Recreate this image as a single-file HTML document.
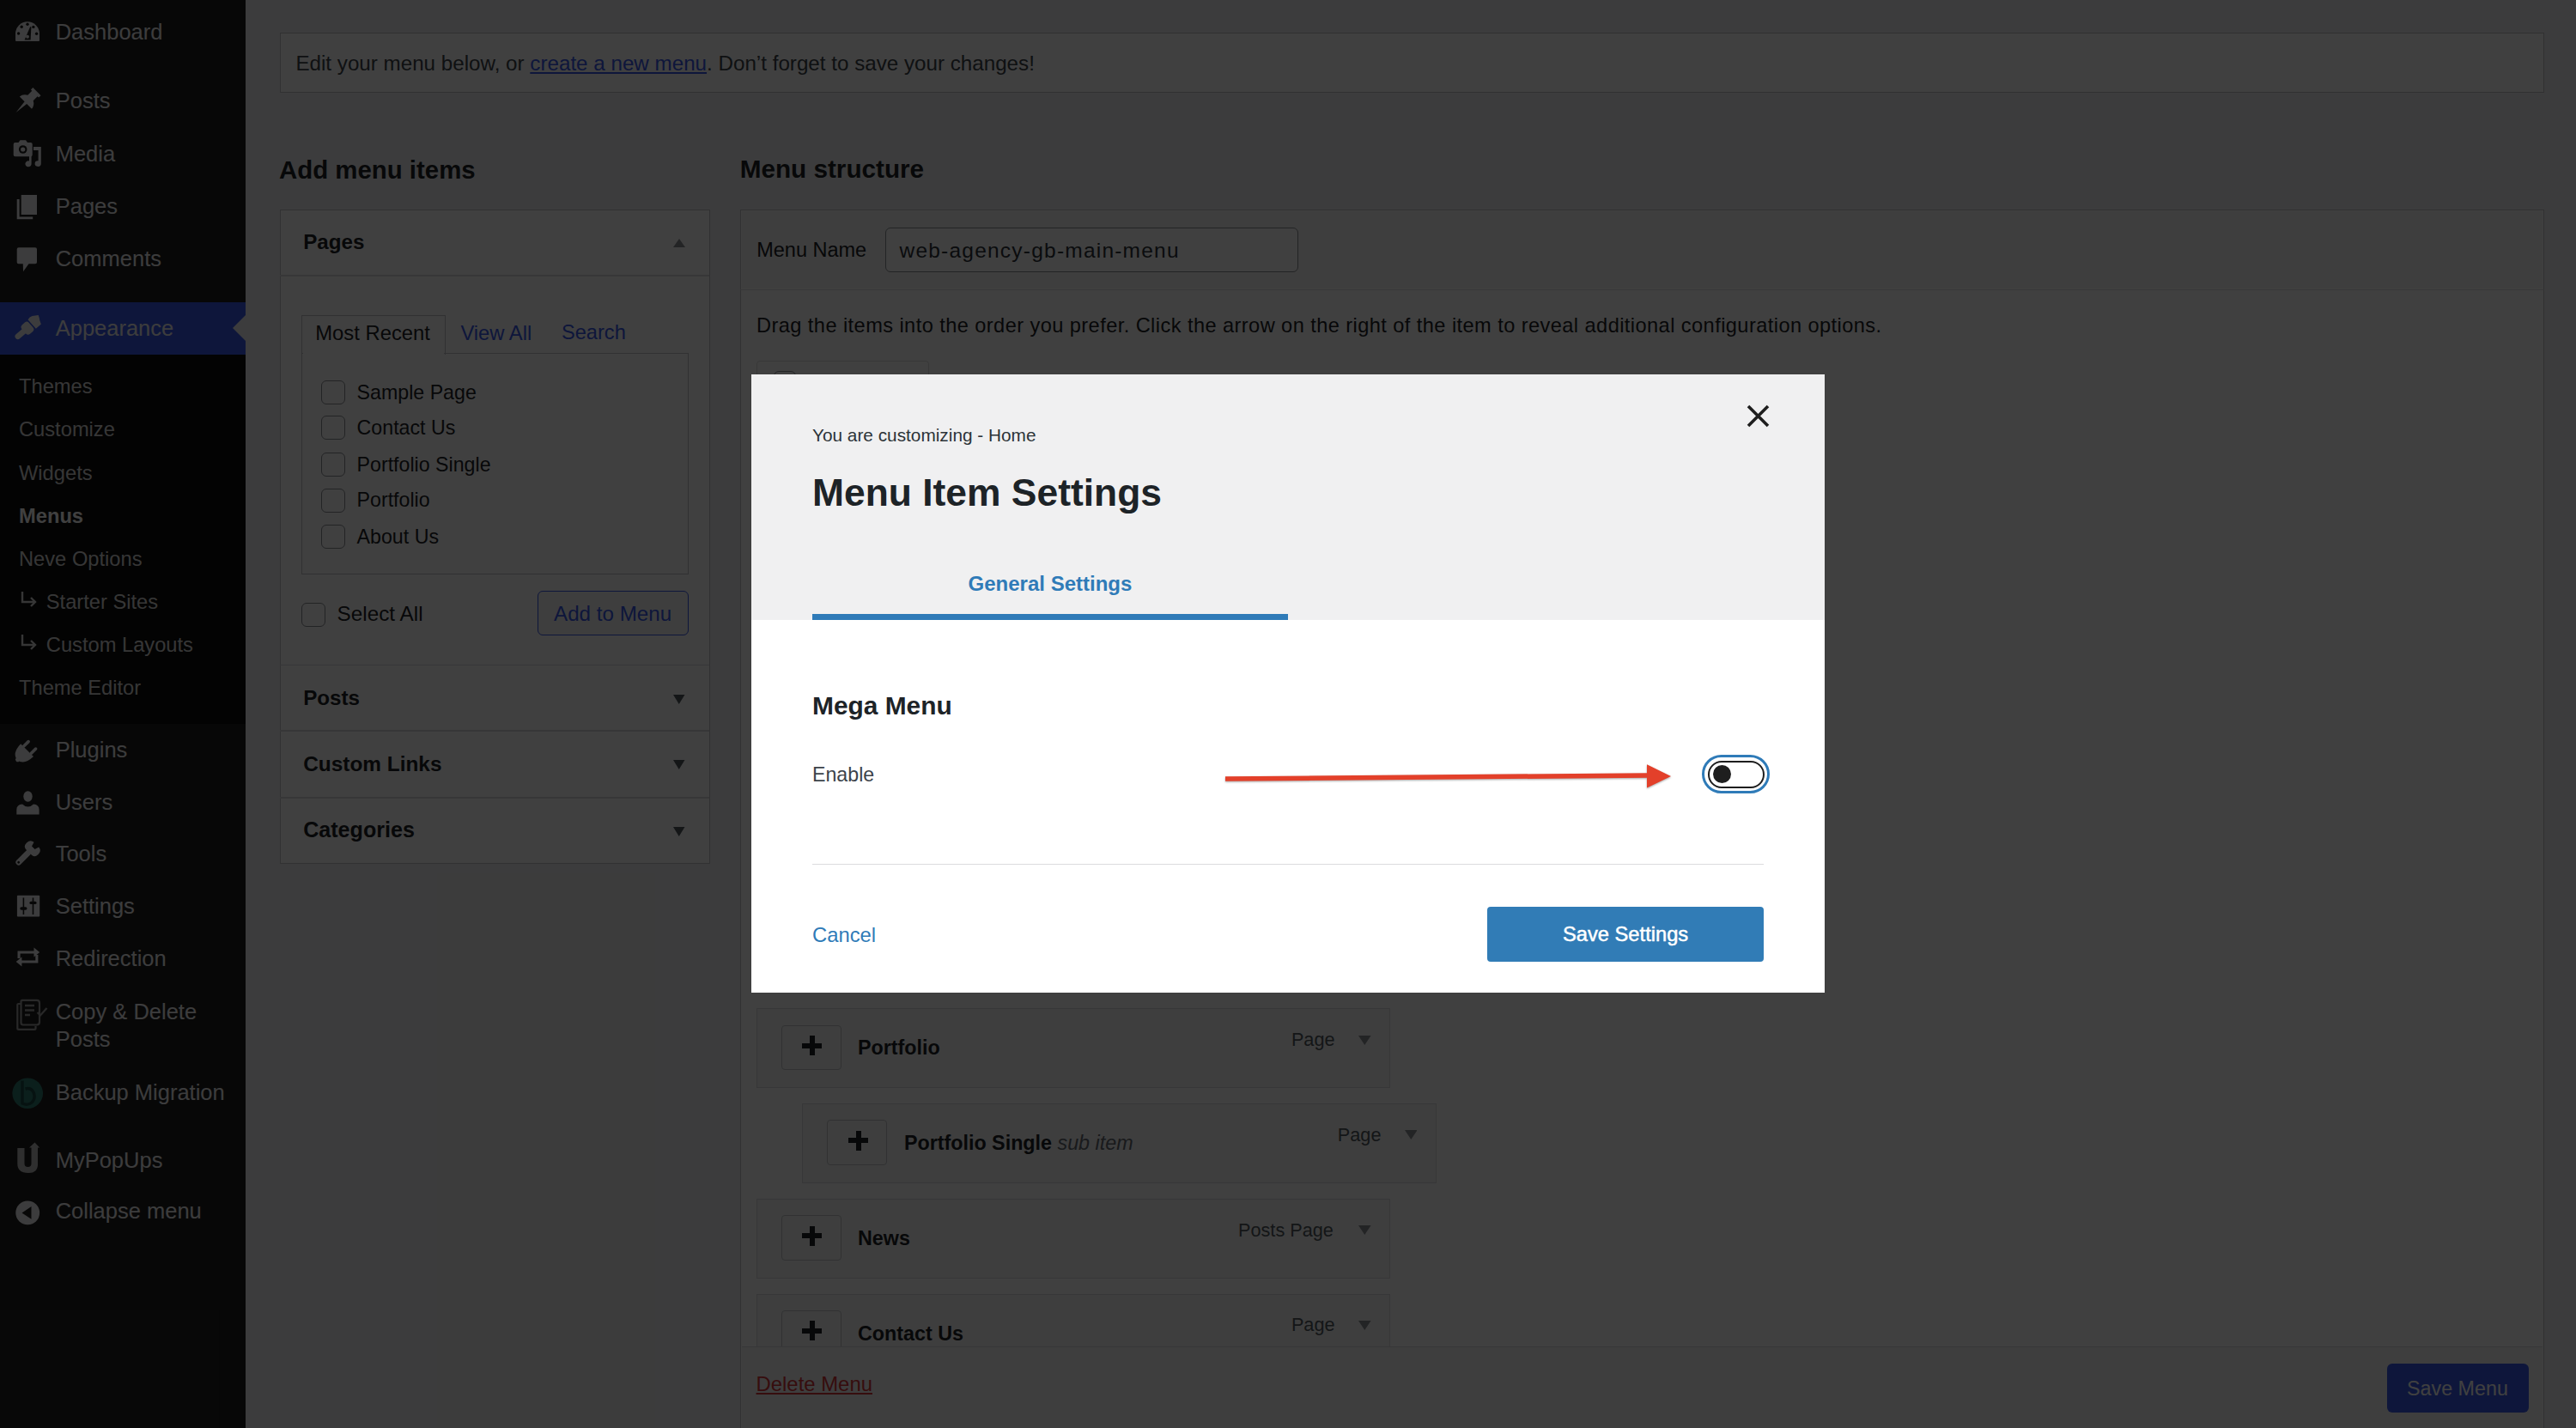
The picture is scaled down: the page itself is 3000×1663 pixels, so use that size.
<!DOCTYPE html>
<html><head><meta charset="utf-8"><title>Menu Item Settings</title>
<style>
html,body{margin:0;padding:0;}
body{width:3000px;height:1663px;position:relative;overflow:hidden;background:#f0f0f1;font-family:"Liberation Sans", sans-serif;}
.t{position:absolute;white-space:nowrap;}
.r{position:absolute;}
</style></head><body>
<div class="r" style="left:0px;top:0px;width:286px;height:1663px;background:#1e1e1e"></div>
<div class="r" style="left:0px;top:352px;width:286px;height:60.6px;background:#3858e9"></div>
<svg class="r" style="left:271px;top:367px" width="15" height="30"><polygon points="15,0 0,15 15,30" fill="#f0f0f1"/></svg>
<div class="r" style="left:0px;top:412.6px;width:286px;height:430px;background:#0c0c0c"></div>
<div class="t " style="left:64.7px;top:24.5px;font-size:25.5px;line-height:25.5px;font-weight:400;color:#f0f0f1;">Dashboard</div>
<div class="t " style="left:64.7px;top:105.3px;font-size:25.5px;line-height:25.5px;font-weight:400;color:#f0f0f1;">Posts</div>
<div class="t " style="left:64.7px;top:166.5px;font-size:25.5px;line-height:25.5px;font-weight:400;color:#f0f0f1;">Media</div>
<div class="t " style="left:64.7px;top:228.3px;font-size:25.5px;line-height:25.5px;font-weight:400;color:#f0f0f1;">Pages</div>
<div class="t " style="left:64.7px;top:289.2px;font-size:25.5px;line-height:25.5px;font-weight:400;color:#f0f0f1;">Comments</div>
<div class="t " style="left:64.7px;top:369.5px;font-size:25.5px;line-height:25.5px;font-weight:400;color:#f0f0f1;">Appearance</div>
<div class="t " style="left:64.7px;top:860.7px;font-size:25.5px;line-height:25.5px;font-weight:400;color:#f0f0f1;">Plugins</div>
<div class="t " style="left:64.7px;top:921.8px;font-size:25.5px;line-height:25.5px;font-weight:400;color:#f0f0f1;">Users</div>
<div class="t " style="left:64.7px;top:982.1px;font-size:25.5px;line-height:25.5px;font-weight:400;color:#f0f0f1;">Tools</div>
<div class="t " style="left:64.7px;top:1043.0px;font-size:25.5px;line-height:25.5px;font-weight:400;color:#f0f0f1;">Settings</div>
<div class="t " style="left:64.7px;top:1104.2px;font-size:25.5px;line-height:25.5px;font-weight:400;color:#f0f0f1;">Redirection</div>
<div class="t " style="left:64.7px;top:1165.9px;font-size:25.5px;line-height:25.5px;font-weight:400;color:#f0f0f1;">Copy &amp; Delete</div>
<div class="t " style="left:64.7px;top:1198.3px;font-size:25.5px;line-height:25.5px;font-weight:400;color:#f0f0f1;">Posts</div>
<div class="t " style="left:64.7px;top:1259.8px;font-size:25.5px;line-height:25.5px;font-weight:400;color:#f0f0f1;">Backup Migration</div>
<div class="t " style="left:64.7px;top:1339.2px;font-size:25.5px;line-height:25.5px;font-weight:400;color:#f0f0f1;">MyPopUps</div>
<div class="t " style="left:64.7px;top:1398.3px;font-size:25.5px;line-height:25.5px;font-weight:400;color:#f0f0f1;">Collapse menu</div>
<div class="t " style="left:22px;top:438.7px;font-size:23.7px;line-height:23.7px;font-weight:400;color:#d8d8d8;">Themes</div>
<div class="t " style="left:22px;top:488.7px;font-size:23.7px;line-height:23.7px;font-weight:400;color:#d8d8d8;">Customize</div>
<div class="t " style="left:22px;top:540.2px;font-size:23.7px;line-height:23.7px;font-weight:400;color:#d8d8d8;">Widgets</div>
<div class="t " style="left:22px;top:640.2px;font-size:23.7px;line-height:23.7px;font-weight:400;color:#d8d8d8;">Neve Options</div>
<div class="t " style="left:22px;top:790.2px;font-size:23.7px;line-height:23.7px;font-weight:400;color:#d8d8d8;">Theme Editor</div>
<div class="t " style="left:22px;top:590.2px;font-size:23.7px;line-height:23.7px;font-weight:700;color:#ffffff;">Menus</div>
<div class="t " style="left:53.8px;top:690.2px;font-size:23.7px;line-height:23.7px;font-weight:400;color:#d8d8d8;">Starter Sites</div>
<div class="t " style="left:53.8px;top:740.2px;font-size:23.7px;line-height:23.7px;font-weight:400;color:#d8d8d8;">Custom Layouts</div>
<svg class="r" style="left:23px;top:688.3px" width="22" height="20"><path d="M3 1 V13 H17" stroke="#d8d8d8" stroke-width="2.4" fill="none"/><path d="M13 8 L18 13 L13 18" stroke="#d8d8d8" stroke-width="2.4" fill="none"/></svg>
<svg class="r" style="left:23px;top:738.3px" width="22" height="20"><path d="M3 1 V13 H17" stroke="#d8d8d8" stroke-width="2.4" fill="none"/><path d="M13 8 L18 13 L13 18" stroke="#d8d8d8" stroke-width="2.4" fill="none"/></svg>
<div class="r" style="left:286px;top:0px;width:2714px;height:1663px;background:#f0f0f1"></div>
<div class="r" style="left:325.5px;top:38px;width:2637.5px;height:70px;background:#fff;border:1.8px solid #c3c4c7;box-sizing:border-box"></div>
<div class="t " style="left:344.4px;top:62.3px;font-size:24.2px;line-height:24.2px;font-weight:400;color:#3c434a;">Edit your menu below, or <span style="color:#3858e9;text-decoration:underline">create a new menu</span>. Don’t forget to save your changes!</div>
<div class="t " style="left:325px;top:182.5px;font-size:29.4px;line-height:29.4px;font-weight:700;color:#1d2327;">Add menu items</div>
<div class="t " style="left:861.7px;top:182.3px;font-size:29.7px;line-height:29.7px;font-weight:700;color:#1d2327;">Menu structure</div>
<div class="r" style="left:325.5px;top:244px;width:501px;height:762px;background:#fff;border:1.8px solid #c3c4c7;box-sizing:border-box"></div>
<div class="r" style="left:326px;top:320px;width:500px;height:1.8px;background:#dcdcde"></div>
<div class="t " style="left:353.2px;top:269.8px;font-size:24.2px;line-height:24.2px;font-weight:700;color:#1d2327;">Pages</div>
<svg class="r" style="left:784px;top:278px" width="14" height="10"><polygon points="7,0 14,10 0,10" fill="#8c8f94"/></svg>
<div class="r" style="left:350.6px;top:366.9px;width:168.6px;height:46px;background:#fff;border:1.8px solid #c3c4c7;border-bottom:none;box-sizing:border-box"></div>
<div class="t " style="left:367.3px;top:376.3px;font-size:23.8px;line-height:23.8px;font-weight:400;color:#1d2327;">Most Recent</div>
<div class="t " style="left:536.4px;top:376.3px;font-size:23.8px;line-height:23.8px;font-weight:400;color:#3858e9;">View All</div>
<div class="t " style="left:654px;top:376.4px;font-size:23.6px;line-height:23.6px;font-weight:400;color:#3858e9;">Search</div>
<div class="r" style="left:350.6px;top:410.6px;width:451px;height:258px;border:1.8px solid #c3c4c7;box-sizing:border-box"></div>
<div class="r" style="left:352.8px;top:409px;width:164.4px;height:4px;background:#fff"></div>
<div class="r" style="left:373.6px;top:443.2px;width:28px;height:28px;border:1.8px solid #8c8f94;border-radius:6px;box-sizing:border-box;background:#fff"></div>
<div class="t " style="left:415.6px;top:446.1px;font-size:23.2px;line-height:23.2px;font-weight:400;color:#1d2327;">Sample Page</div>
<div class="r" style="left:373.6px;top:484.4px;width:28px;height:28px;border:1.8px solid #8c8f94;border-radius:6px;box-sizing:border-box;background:#fff"></div>
<div class="t " style="left:415.6px;top:487.3px;font-size:23.2px;line-height:23.2px;font-weight:400;color:#1d2327;">Contact Us</div>
<div class="r" style="left:373.6px;top:527.4px;width:28px;height:28px;border:1.8px solid #8c8f94;border-radius:6px;box-sizing:border-box;background:#fff"></div>
<div class="t " style="left:415.6px;top:530.3px;font-size:23.2px;line-height:23.2px;font-weight:400;color:#1d2327;">Portfolio Single</div>
<div class="r" style="left:373.6px;top:568.5px;width:28px;height:28px;border:1.8px solid #8c8f94;border-radius:6px;box-sizing:border-box;background:#fff"></div>
<div class="t " style="left:415.6px;top:571.4px;font-size:23.2px;line-height:23.2px;font-weight:400;color:#1d2327;">Portfolio</div>
<div class="r" style="left:373.6px;top:611.2px;width:28px;height:28px;border:1.8px solid #8c8f94;border-radius:6px;box-sizing:border-box;background:#fff"></div>
<div class="t " style="left:415.6px;top:614.1px;font-size:23.2px;line-height:23.2px;font-weight:400;color:#1d2327;">About Us</div>
<div class="r" style="left:350.6px;top:702px;width:28px;height:28px;border:1.8px solid #8c8f94;border-radius:6px;box-sizing:border-box;background:#fff"></div>
<div class="t " style="left:392.6px;top:702.8px;font-size:24.3px;line-height:24.3px;font-weight:400;color:#1d2327;">Select All</div>
<div class="r" style="left:625.5px;top:688.2px;width:176px;height:52.2px;border:1.8px solid #3858e9;border-radius:6px;box-sizing:border-box;background:#f6f7f7"></div>
<div class="t " style="left:645px;top:702.7px;font-size:24.2px;line-height:24.2px;font-weight:400;color:#3858e9;">Add to Menu</div>
<div class="r" style="left:326px;top:773.5px;width:500px;height:1.8px;background:#dcdcde"></div>
<div class="t " style="left:353.2px;top:801.4px;font-size:24.2px;line-height:24.2px;font-weight:700;color:#1d2327;">Posts</div>
<svg class="r" style="left:784.3px;top:808.5px" width="13.5" height="11"><polygon points="0,0 13.5,0 6.75,11" fill="#50575e"/></svg>
<div class="r" style="left:326px;top:850.3px;width:500px;height:1.8px;background:#dcdcde"></div>
<div class="t " style="left:353.2px;top:878.1px;font-size:24.4px;line-height:24.4px;font-weight:700;color:#1d2327;">Custom Links</div>
<svg class="r" style="left:784.3px;top:885.3px" width="13.5" height="11"><polygon points="0,0 13.5,0 6.75,11" fill="#50575e"/></svg>
<div class="r" style="left:326px;top:928px;width:500px;height:1.8px;background:#dcdcde"></div>
<div class="t " style="left:353.2px;top:954.0px;font-size:25.1px;line-height:25.1px;font-weight:700;color:#1d2327;">Categories</div>
<svg class="r" style="left:784.3px;top:963px" width="13.5" height="11"><polygon points="0,0 13.5,0 6.75,11" fill="#50575e"/></svg>
<div class="r" style="left:862px;top:244px;width:2101.3px;height:1500px;background:#fff;border:1.8px solid #c3c4c7;box-sizing:border-box"></div>
<div class="r" style="left:863.8px;top:245.8px;width:2097.4px;height:90.7px;background:#f6f7f7"></div>
<div class="r" style="left:862px;top:336.5px;width:2101px;height:1.8px;background:#dcdcde"></div>
<div class="t " style="left:881.2px;top:280.3px;font-size:23.5px;line-height:23.5px;font-weight:400;color:#1d2327;">Menu Name</div>
<div class="r" style="left:1030.7px;top:265px;width:481.5px;height:52.2px;border:1.8px solid #8c8f94;border-radius:6px;box-sizing:border-box;background:#fff"></div>
<div class="t " style="left:1047.5px;top:279.5px;font-size:24.5px;line-height:24.5px;font-weight:400;color:#2c3338;letter-spacing:1.22px">web-agency-gb-main-menu</div>
<div class="t " style="left:881px;top:368.0px;font-size:23.6px;line-height:23.6px;font-weight:400;color:#1d2327;letter-spacing:0.43px">Drag the items into the order you prefer. Click the arrow on the right of the item to reveal additional configuration options.</div>
<div class="r" style="left:881px;top:420px;width:200.5px;height:100px;border:1.8px solid #dcdcde;border-radius:4px;box-sizing:border-box;background:#fff"></div>
<div class="r" style="left:900.8px;top:432px;width:26.6px;height:26px;border:1.8px solid #8c8f94;border-radius:6px;box-sizing:border-box"></div>
<div class="r" style="left:880.5px;top:1174.4px;width:738.5px;height:93px;background:#f6f7f7;border:1.8px solid #dcdcde;box-sizing:border-box"></div>
<div class="r" style="left:909.5px;top:1193.8000000000002px;width:70px;height:52.5px;background:#f6f7f7;border:1.8px solid #c3c4c7;border-radius:4px;box-sizing:border-box"></div>
<div class="r" style="left:934.1999999999999px;top:1214.5px;width:23.2px;height:6px;background:#1d2327"></div>
<div class="r" style="left:942.8px;top:1205.9px;width:6px;height:23.2px;background:#1d2327"></div>
<div class="t " style="left:999.0px;top:1209.2px;font-size:23.3px;line-height:23.3px;font-weight:700;color:#1d2327;">Portfolio</div>
<div class="t " style="left:1503.9px;top:1200.0px;font-size:21.7px;line-height:21.7px;font-weight:400;color:#50575e;">Page</div>
<svg class="r" style="left:1582.0px;top:1205.7px" width="14.6" height="11"><polygon points="0,0 14.6,0 7.3,11" fill="#8c8f94"/></svg>
<div class="r" style="left:934.4px;top:1285px;width:738.5px;height:93px;background:#f6f7f7;border:1.8px solid #dcdcde;box-sizing:border-box"></div>
<div class="r" style="left:963.4px;top:1304.4px;width:70px;height:52.5px;background:#f6f7f7;border:1.8px solid #c3c4c7;border-radius:4px;box-sizing:border-box"></div>
<div class="r" style="left:988.0999999999999px;top:1325.1px;width:23.2px;height:6px;background:#1d2327"></div>
<div class="r" style="left:996.6999999999999px;top:1316.5px;width:6px;height:23.2px;background:#1d2327"></div>
<div class="t " style="left:1052.9px;top:1319.8px;font-size:23.3px;line-height:23.3px;font-weight:700;color:#1d2327;">Portfolio Single <i style='font-weight:400;color:#646970'>sub item</i></div>
<div class="t " style="left:1557.8000000000002px;top:1310.6px;font-size:21.7px;line-height:21.7px;font-weight:400;color:#50575e;">Page</div>
<svg class="r" style="left:1635.9px;top:1316.3px" width="14.6" height="11"><polygon points="0,0 14.6,0 7.3,11" fill="#8c8f94"/></svg>
<div class="r" style="left:880.5px;top:1396px;width:738.5px;height:93px;background:#f6f7f7;border:1.8px solid #dcdcde;box-sizing:border-box"></div>
<div class="r" style="left:909.5px;top:1415.4px;width:70px;height:52.5px;background:#f6f7f7;border:1.8px solid #c3c4c7;border-radius:4px;box-sizing:border-box"></div>
<div class="r" style="left:934.1999999999999px;top:1436.1px;width:23.2px;height:6px;background:#1d2327"></div>
<div class="r" style="left:942.8px;top:1427.5px;width:6px;height:23.2px;background:#1d2327"></div>
<div class="t " style="left:999.0px;top:1430.8px;font-size:23.3px;line-height:23.3px;font-weight:700;color:#1d2327;">News</div>
<div class="t " style="left:1442.0px;top:1421.6px;font-size:21.7px;line-height:21.7px;font-weight:400;color:#50575e;">Posts Page</div>
<svg class="r" style="left:1582.0px;top:1427.3px" width="14.6" height="11"><polygon points="0,0 14.6,0 7.3,11" fill="#8c8f94"/></svg>
<div class="r" style="left:880.5px;top:1506.8px;width:738.5px;height:93px;background:#f6f7f7;border:1.8px solid #dcdcde;box-sizing:border-box"></div>
<div class="r" style="left:909.5px;top:1526.2px;width:70px;height:52.5px;background:#f6f7f7;border:1.8px solid #c3c4c7;border-radius:4px;box-sizing:border-box"></div>
<div class="r" style="left:934.1999999999999px;top:1546.8999999999999px;width:23.2px;height:6px;background:#1d2327"></div>
<div class="r" style="left:942.8px;top:1538.3px;width:6px;height:23.2px;background:#1d2327"></div>
<div class="t " style="left:999.0px;top:1541.6px;font-size:23.3px;line-height:23.3px;font-weight:700;color:#1d2327;">Contact Us</div>
<div class="t " style="left:1503.9px;top:1532.4px;font-size:21.7px;line-height:21.7px;font-weight:400;color:#50575e;">Page</div>
<svg class="r" style="left:1582.0px;top:1538.1px" width="14.6" height="11"><polygon points="0,0 14.6,0 7.3,11" fill="#8c8f94"/></svg>
<div class="r" style="left:863.8px;top:1568.4px;width:2097.4px;height:100px;background:#f6f7f7;border-top:1.8px solid #dcdcde;box-sizing:border-box"></div>
<div class="t " style="left:880.5px;top:1599.7px;font-size:23.9px;line-height:23.9px;font-weight:400;color:#d63638;text-decoration:underline">Delete Menu</div>
<div class="r" style="left:2780px;top:1588px;width:165px;height:56.5px;background:#3858e9;border-radius:6px"></div>
<div class="t " style="left:2803px;top:1605.5px;font-size:23.3px;line-height:23.3px;font-weight:400;color:#ffffff;">Save Menu</div>
<svg class="r" style="left:0;top:0" width="286" height="1663"><path d="M18 47 V39.3 A14 14 0 0 1 46 39.3 V47 Q46 48 45 48 H19 Q18 48 18 47 Z" fill="#f0f0f1"/><circle cx="21.6" cy="39" r="1.7" fill="#1e1e1e"/><circle cx="25.2" cy="31.2" r="1.7" fill="#1e1e1e"/><circle cx="32" cy="28.3" r="1.7" fill="#1e1e1e"/><circle cx="38.9" cy="31.4" r="1.7" fill="#1e1e1e"/><circle cx="42.6" cy="39.2" r="1.7" fill="#1e1e1e"/><path d="M28.6 46.5 L35.2 31 L36.4 31.4 L35.6 46.5 Z" fill="#1e1e1e"/><circle cx="32" cy="42.8" r="2" fill="#f0f0f1"/><g transform="translate(32,117.5) rotate(45)"><path d="M-6.5 -15.5 H6.5 V-12 H4.5 V-5 Q9.5 -2.5 10 3 H1.8 L0 19 L-1.8 3 H-10 Q-9.5 -2.5 -4.5 -5 V-12 H-6.5 Z" fill="#f0f0f1"/></g><path d="M15.7 168 Q15.7 166 17.7 166 H21.5 L23.5 163.2 H30 L32 166 H35.7 Q37.7 166 37.7 168 V180.3 Q37.7 182.3 35.7 182.3 H17.7 Q15.7 182.3 15.7 180.3 Z" fill="#f0f0f1"/><circle cx="26.7" cy="174" r="4.8" fill="#1e1e1e"/><circle cx="26.7" cy="174" r="2.6" fill="#f0f0f1"/><path d="M39 171 H47.8 V190.5 A3.6 3.4 0 1 1 44.6 187.2 V175 H39 Z" fill="#f0f0f1"/><path d="M34 181.5 H36.6 V190.5 A3.6 3.4 0 1 1 34 187.5 Z" fill="#f0f0f1"/><path d="M24.7 227 H43 V250 H24.7 Z" fill="#f0f0f1"/><path d="M19.7 232 H22.6 V252.4 H38.2 V255.2 H19.7 Z" fill="#f0f0f1"/><path d="M21.7 288.2 H41 Q43 288.2 43 290.2 V305.3 Q43 307.3 41 307.3 H33.5 L27 316.3 L26.8 307.3 H21.7 Q19.7 307.3 19.7 305.3 V290.2 Q19.7 288.2 21.7 288.2 Z" fill="#f0f0f1"/><g transform="translate(19.5,393) rotate(-41)"><rect x="-1.5" y="-3.3" width="17" height="6.6" rx="3.3" fill="#f0f0f1"/><rect x="11" y="-7" width="11" height="14" rx="3.5" fill="#f0f0f1"/><path d="M23.5 -7.2 Q27 -8.5 30 -7 L36 -3 Q35 0 33 3 L31.5 7 H23.5 Z" fill="#f0f0f1"/></g><g transform="translate(31.2,874) rotate(-45)"><path d="M0.5 -10.5 Q-15 -10 -15.5 0 Q-15 10 0.5 10.5 Z" fill="#f0f0f1"/><rect x="-0.5" y="-7.8" width="11" height="3.6" rx="1.8" fill="#f0f0f1"/><rect x="-0.5" y="4.2" width="11" height="3.6" rx="1.8" fill="#f0f0f1"/><circle cx="-15" cy="0" r="2.6" fill="#f0f0f1"/></g><ellipse cx="32.5" cy="927.5" rx="5.2" ry="6.2" fill="#f0f0f1"/><path d="M19.3 948.4 V943 Q19.3 937 26 936.5 Q29 939.5 32.5 939.5 Q36 939.5 39 936.5 Q45.6 937 45.6 943 V948.4 Z" fill="#f0f0f1"/><g transform="translate(21.5,1004.5) rotate(-45)"><rect x="-3" y="-3.4" width="22" height="6.8" rx="3.4" fill="#f0f0f1"/><circle cx="0.2" cy="0" r="1.4" fill="#1e1e1e"/><path d="M17 -4 Q17 -9.5 23 -9.5 Q29 -9.5 29.5 -4 L24.5 -2.5 V2.5 L29.5 4 Q29 9.5 23 9.5 Q17 9.5 17 4 Z" fill="#f0f0f1"/></g><rect x="19.9" y="1042.7" width="26.3" height="24.9" rx="1" fill="#f0f0f1"/><path d="M27.4 1045.5 V1065 M38.5 1045.5 V1065" stroke="#1e1e1e" stroke-width="1.6"/><rect x="23.3" y="1056.3" width="8.2" height="3.4" rx="1.7" fill="#1e1e1e"/><rect x="34.4" y="1049.7" width="8.2" height="3.4" rx="1.7" fill="#1e1e1e"/><path d="M20.5 1116 V1107.5 H39.5 V1103.5 L46.2 1109 L39.5 1114.5 V1110.6 H23.6 V1116 Z" fill="#f0f0f1"/><path d="M44.4 1112 V1121.5 H25.4 V1125.5 L18.7 1120 L25.4 1114.5 V1118.4 H41.3 V1112 Z" fill="#f0f0f1"/><path d="M24 1169 H21.5 Q20.3 1169 20.3 1170.5 V1197.5 Q20.3 1198.9 21.8 1198.9 H40 Q41.5 1198.9 41.5 1197.5 V1195" fill="none" stroke="#a0a0a0" stroke-width="2.2"/><path d="M26 1164.8 H43 Q46 1164.8 46 1168 V1190 Q46 1193.5 43 1193.5 H27 Q24.5 1193.5 24.5 1191 V1166.5 Q24.5 1164.8 26 1164.8 Z" fill="none" stroke="#a0a0a0" stroke-width="2.2"/><path d="M29 1171 H40 M29 1176.5 H40 M29 1182 H35" stroke="#a0a0a0" stroke-width="2.6"/><path d="M43.5 1179 L47 1182.5 L54.5 1174" fill="none" stroke="#a0a0a0" stroke-width="2.2"/><circle cx="32.2" cy="1273.2" r="17.8" fill="#2f7d72"/><path d="M26 1258.5 V1285 Q32 1288 37 1284 Q42 1279 39 1272 Q36 1266 29.5 1268" fill="none" stroke="#1b4a44" stroke-width="3.5"/><path d="M20.3 1337 H28.5 V1355 Q28.5 1359 32.5 1359 Q36.5 1359 36.5 1355 V1336.5 H34 L40.5 1330.5 L46.2 1336.5 H44 V1356 Q44 1366 33 1366 Q20.3 1366 20.3 1355 Z" fill="#bdbdbd"/><circle cx="32.2" cy="1412.4" r="13.9" fill="#f0f0f1"/><polygon points="36.5,1405 25.5,1412.4 36.5,1419.8" fill="#1e1e1e"/></svg>
<div class="r" style="left:0px;top:0px;width:3000px;height:1663px;background:rgba(0,0,0,0.75)"></div>
<div class="r" style="left:875px;top:436px;width:1250px;height:720px;background:#fff"></div>
<div class="r" style="left:875px;top:436px;width:1250px;height:286px;background:#f0f0f1"></div>
<svg class="r" style="left:2033px;top:470px" width="29" height="29" viewBox="0 0 29 29"><path d="M3 3 L26 26 M26 3 L3 26" stroke="#1e1e1e" stroke-width="3.6"/></svg>
<div class="t " style="left:946px;top:496.9px;font-size:20.8px;line-height:20.8px;font-weight:400;color:#2c3338;">You are customizing - Home</div>
<div class="t " style="left:946px;top:552.1px;font-size:44.4px;line-height:44.4px;font-weight:700;color:#1d2327;">Menu Item Settings</div>
<div class="t " style="left:1127.6px;top:668.1px;font-size:24px;line-height:24px;font-weight:700;color:#2f7bb8;">General Settings</div>
<div class="r" style="left:946px;top:715px;width:554px;height:7px;background:#2f7bb8"></div>
<div class="t " style="left:946px;top:807.3px;font-size:29.9px;line-height:29.9px;font-weight:700;color:#1d2327;">Mega Menu</div>
<div class="t " style="left:946px;top:891.3px;font-size:23.2px;line-height:23.2px;font-weight:400;color:#3c434a;">Enable</div>
<svg class="r" style="left:1420px;top:885px" width="535" height="40" viewBox="1420 885 535 40"><g style="filter:drop-shadow(0px 1.5px 1.2px rgba(0,0,0,0.35))"><path d="M1427 907 L1920 903" stroke="#e3402a" stroke-width="5.5" stroke-linecap="butt"/><polygon points="1918,890.3 1946,904 1918,917.6" fill="#e3402a"/></g></svg>
<div class="r" style="left:1982.3px;top:879.4px;width:78.4px;height:44.8px;border:3px solid #2f7bb8;border-radius:23px;box-sizing:border-box"></div>
<div class="r" style="left:1988.5px;top:885.6px;width:66px;height:32.4px;border:2.4px solid #1e1e1e;border-radius:17px;box-sizing:border-box;background:#fff"></div>
<div class="r" style="left:1994.5px;top:890.8px;width:21.6px;height:21.6px;background:#1e1e1e;border-radius:50%"></div>
<div class="r" style="left:946px;top:1005.5px;width:1108px;height:1.8px;background:#dcdcde"></div>
<div class="t " style="left:946px;top:1076.6px;font-size:23.8px;line-height:23.8px;font-weight:400;color:#2f7bb8;">Cancel</div>
<div class="r" style="left:1731.8px;top:1056px;width:322.2px;height:63.5px;background:#317cb6;border-radius:4px"></div>
<div class="t " style="left:1820px;top:1076.9px;font-size:23.7px;line-height:23.7px;font-weight:400;color:#ffffff;-webkit-text-stroke:0.5px #fff">Save Settings</div>
</body></html>
